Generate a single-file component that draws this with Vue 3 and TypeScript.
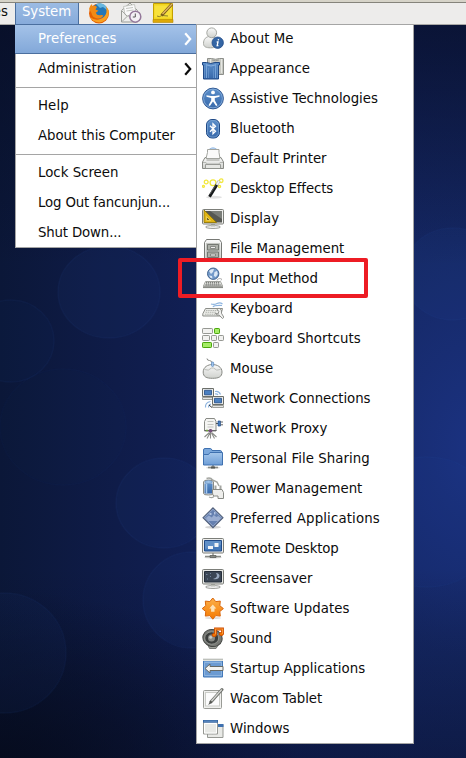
<script setup lang="ts">
interface Item {
  label: string
  icon: string
  tracking?: number
}

interface Entry {
  label: string
  submenu?: boolean
  active?: boolean
  tracking?: number
}

const groups: Entry[][] = [
  [
    { label: 'Preferences', submenu: true, active: true },
    { label: 'Administration', submenu: true, tracking: 0.05 },
  ],
  [{ label: 'Help', tracking: 0.1 }, { label: 'About this Computer', tracking: -0.08 }],
  [
    { label: 'Lock Screen' },
    { label: 'Log Out fancunjun...', tracking: -0.16 },
    { label: 'Shut Down...', tracking: -0.16 },
  ],
]

const starPoints = Array.from({ length: 16 }, (_, i) => {
  const r = i % 2 ? 7.6 : 10.6
  const a = (i * Math.PI) / 8
  return `${(10.8 + r * Math.sin(a)).toFixed(2)},${(11.6 - r * Math.cos(a)).toFixed(2)}`
}).join(' ')

const preferences: Item[] = [
  {
    label: 'About Me',
    icon: `<path d="M1.500 16.500C1.500 12 4 9.500 8 9.500s7 2.500 7 7c0 3.300-2 4.300-6.500 4.300s-7-1-7-4.300z" fill="url(#g-gray)" stroke="#a6a8a3"/><circle cx="9.700" cy="5.800" r="4.900" fill="url(#g-gray)" stroke="#a6a8a3"/><circle cx="15.700" cy="15.700" r="5.700" fill="#3465a4" stroke="#204a87" stroke-width=".8"/><path d="M16.500 12.200l-.2 1.200M14.700 15h1.300l-.8 3.700h1.200" fill="none" stroke="#fff" stroke-width="1.300"/>`,
  },
  {
    label: 'Appearance',
    icon: `<path d="M5.500 1.500h4q4 1.500 8 0h4v16h-16z" fill="#c6c8c2" stroke="#8d8f8a"/><path d="M8.500 2v14M19.500 2v14" stroke="#e6e7e3"/><path d="M10 3q3.500 1.500 7 0M11 6h6" fill="none" stroke="#999b96"/><path d="M.5 5.500h4q4.500 2 8.500 0h4.500v2.500h-1v14h-15v-14h-1z" fill="url(#g-blue)" stroke="#204a87"/><path d="M4.500 7v14M13.500 7v14" stroke="#79a5d8"/><path d="M2.500 9v12M15.500 9v12M6.500 11v10M11.500 11v10" stroke="#6694cb" stroke-width=".8"/><path d="M5 8q4 2 8 0" fill="none" stroke="#8ab1e0"/>`,
  },
  {
    label: 'Assistive Technologies',
    tracking: -0.03,
    icon: `<circle cx="11" cy="11.500" r="10.400" fill="url(#g-blue)" stroke="#204a87" stroke-width=".9"/><circle cx="11" cy="11.500" r="9.400" fill="none" stroke="#8db4df" stroke-width=".8"/><circle cx="11" cy="5.400" r="1.900" fill="#fff"/><path d="M4.500 8.200l4.500.8h4l4.500-.8v1.500l-4.700 1.200v2.600l2.700 4.800-1.400.6L11 14.500l-3.100 4.400-1.400-.6 2.700-4.800v-2.600L4.500 9.700z" fill="#fff"/>`,
  },
  {
    label: 'Bluetooth',
    icon: `<rect x="4.500" y="2.500" width="13" height="18.500" rx="5.500" fill="url(#g-blue)" stroke="#204a87"/><rect x="5.500" y="3.500" width="11" height="16.500" rx="4.500" fill="none" stroke="#79a3d2" stroke-width=".8"/><path d="M8 8.700l5.500 5.600-2.500 2.500V6.700l2.500 2.500L8 14.800" fill="none" stroke="#fff" stroke-width="1.300"/>`,
  },
  {
    label: 'Default Printer',
    tracking: -0.05,
    icon: `<path d="M7 2.500q4-3.500 8 0" fill="#bcd5f2" stroke="#8db4df" stroke-width=".8"/><path d="M3 10.500h16l2.500 4.500v6.500H.5V15z" fill="url(#g-gray)" stroke="#888a85"/><path d="M5.500 2.500h11.500v3l1 6h-14l1.500-6z" fill="#fafafa" stroke="#a3a5a0"/><path d="M4.500 13h13" stroke="#999b96"/><path d="M1 15.500h3l1 1.500h12l1-1.500h3" fill="none" stroke="#b5b7b2"/><path d="M3.500 17.500h15v4h-15z" fill="#e6e7e4" stroke="#888a85" stroke-width=".8"/>`,
  },
  {
    label: 'Desktop Effects',
    tracking: -0.1,
    icon: `<ellipse cx="12" cy="20.300" rx="8" ry="1.500" fill="#e2e2e2"/><g fill="none" stroke="#f2e83b" stroke-width="1.300"><circle cx="4.200" cy="5" r="1.900"/><circle cx="11" cy="5.700" r="2.900"/><circle cx="19.200" cy="3.700" r="1.800"/><circle cx="1.500" cy="9.300" r="1"/><circle cx="17.500" cy="9.500" r="1.100"/></g><path d="M7.500 19.800L15 7.500" stroke="#16191a" stroke-width="3"/><path d="M8 17L13.500 8.500" stroke="#777" stroke-width=".7"/><path d="M14.700 8L17.200 3.800" stroke="#b9bbb7" stroke-width="3"/><path d="M14.900 7.700L17.100 4.200" stroke="#f6f6f4" stroke-width="1.500"/>`,
  },
  {
    label: 'Display',
    icon: `<ellipse cx="11" cy="20" rx="7.500" ry="1.500" fill="#eee" stroke="#888a85" stroke-width=".8"/><path d="M9 17h4v2.500H9z" fill="#babdb6"/><rect x=".5" y="2.500" width="21" height="14.500" rx="1" fill="#eeeeec" stroke="#7c7e79"/><path d="M2 4h18v11.500H2z" fill="#555753"/><path d="M8 4h12v8z" fill="#7a7d78"/><path d="M2 3l12.500 12.500H2z" fill="#e0b414" stroke="#8f7400" stroke-width=".8"/><path d="M4.500 9.500v4h4z" fill="#75641c" stroke="#f5dc61" stroke-width=".8"/>`,
  },
  {
    label: 'File Management',
    icon: `<path d="M4.500 2.500h13l2 3v16.500h-17V5.500z" fill="url(#g-gray)" stroke="#777975"/><path d="M4 6h14v15H4z" fill="#c4c6c1"/><g fill="#aeb1aa" stroke="#6c6f6a" stroke-width=".9"><path d="M5.500 7.500h11v5.500h-11zM5.500 15h11v5.500h-11z"/></g><path d="M8.500 9.500h5v2h-5zM8.500 17h5v2h-5z" fill="#eeeeec" stroke="#777975" stroke-width=".8"/>`,
  },
  {
    label: 'Input Method',
    tracking: -0.08,
    icon: `<path d="M15 13.500q0-2 3-2t1 2" fill="none" stroke="#bbb"/><circle cx="11.200" cy="6.700" r="5.700" fill="#7299c9" stroke="#365987" stroke-width=".9"/><path d="M7 4q2-2.500 5-2l-1 3-2 2zM12.500 5l2.500-1 .8 3-2 3-2-1zM7 8.500l3 .5.500 2.500q-2.500-.3-3.500-3z" fill="#dbe7f4"/><path d="M3.500 14.500h15l2 4.500h-19z" fill="#e9eae7" stroke="#a0a29d"/><path d="M4 15.800h14M3.500 17.800h15" stroke="#5c5e5b" stroke-width="1.200" stroke-dasharray="1.300 .7"/><path d="M1 19.300h20v1.800H1z" fill="#898b86"/>`,
  },
  {
    label: 'Keyboard',
    icon: `<path d="M9 7q3 1 6-.5t5.500.5M11 10q1-2 9-1.500" fill="none" stroke="#8db4df" stroke-width="1.200"/><path d="M3.500 11.500h17l-2 7.500H.8v-2.200z" fill="#ecede9" stroke="#8b8d88"/><path d="M4 13.500h13M3.500 15.300h11M3 17.200h10" stroke="#b3b5b0" stroke-width="1.100" stroke-dasharray="1.500 .7"/><path d="M14.500 11.500q3.500-1 4.800 1.500l.3 3.500 2.300 3.800-1.500 1.200-3.200-3.400q-3 .8-3.800-1.700l2.700.5.7-2.500z" fill="#f2f2f0" stroke="#858782" stroke-width=".9"/>`,
  },
  {
    label: 'Keyboard Shortcuts',
    icon: `<g fill="#f2f2f0" stroke="#969893"><rect x=".5" y="1.500" width="10" height="5" rx=".7"/><rect x=".5" y="8.500" width="7" height="5" rx=".7"/><rect x="9.500" y="8.500" width="5" height="5" rx=".7"/><rect x="16.500" y="8.500" width="5" height="5" rx=".7"/><rect x="11.500" y="15.500" width="5" height="5" rx=".7"/></g><g fill="#a5ec66" stroke="#4aa60c"><rect x="12.500" y="1.500" width="5" height="5" rx=".7"/><rect x=".5" y="15.500" width="9" height="5" rx=".7"/></g>`,
  },
  {
    label: 'Mouse',
    icon: `<path d="M5 1.500q0 2 2.500 2t3 3.500" fill="none" stroke="#888a85"/><path d="M1.200 15C1.200 10 6 7.500 10.500 7.500S20 10 20 15s-3.500 6.300-9.500 6.300S1.200 20 1.200 15z" fill="url(#g-gray)" stroke="#888a85"/><path d="M2.500 12.500q4 2 7-1.500h2q3 3.500 7 1.500" fill="none" stroke="#bbbdb8"/><rect x="9.500" y="5" width="2.200" height="4.500" rx="1.100" fill="#a3c6ed" stroke="#5887bf" stroke-width=".7"/>`,
  },
  {
    label: 'Network Connections',
    tracking: -0.1,
    icon: `<path d="M13 4.500q4-1 5.500 3M13 7q2-.5 3 1M3.500 20.500q-.5-5 5-6M6.500 20.500q0-3 2.500-3.500" fill="none" stroke="#8db4df" stroke-width="1.200"/><g><path d="M.5 1.500h11v8H.5z" fill="#ecece9" stroke="#6c6f6a"/><path d="M2.500 3.300h7v4.500h-7z" fill="#4b80c0" stroke="#204a87" stroke-width=".8"/><path d="M.5 10.500h11v2H.5z" fill="#e6e6e4" stroke="#888a85" stroke-width=".8"/></g><g transform="translate(10 8)"><path d="M.5 1.500h11v8H.5z" fill="#ecece9" stroke="#6c6f6a"/><path d="M2.500 3.300h7v4.500h-7z" fill="#4b80c0" stroke="#204a87" stroke-width=".8"/><path d="M.5 10.500h11v2H.5z" fill="#e6e6e4" stroke="#888a85" stroke-width=".8"/></g><path d="M7 18l3 2.500" stroke="#333"/>`,
  },
  {
    label: 'Network Proxy',
    tracking: 0.08,
    icon: `<path d="M7.500 15.500l-5 4.500M8.500 15v6.500M9.500 15.500l5 4.500M8 16l-3 5.500M9.500 16l3 5.500" stroke="#8b8d88" stroke-width="1.100"/><path d="M4 1.500h8.500l1.500 3v9.500H2.500V4.500z" fill="#f5f5f3" stroke="#888a85"/><path d="M5.500 4.500h6M5.500 7.500h6M5.500 10h6" stroke="#c3c5c0"/><path d="M14 6.500h2.500" stroke="#555"/><path d="M16 4h2.500v5H16z" fill="#4b80c0" stroke="#204a87" stroke-width=".7"/><path d="M18.500 5h2.500M18.500 7.800h2.500" stroke="#666"/><path d="M2.500 13.500h12" stroke="#666"/><ellipse cx="8.500" cy="13.700" rx="2" ry="1.800" fill="#75507b"/><path d="M4 13.500h2" stroke="#73a33b" stroke-width="1.500"/>`,
  },
  {
    label: 'Personal File Sharing',
    tracking: 0.06,
    icon: `<ellipse cx="11" cy="20.700" rx="7" ry="1.200" fill="#ddd"/><path d="M11 18v3M6 20.500h10" stroke="#888a85" stroke-width="1.500"/><path d="M9 19.500h4v2H9z" fill="#555753"/><path d="M1.500 3q0-1.500 1.500-1.500h5.500q1 0 1.500 2h8.500q1 0 1 1.500v11h-18z" fill="#7ba8dc" stroke="#3f71b0"/><path d="M1.500 7.500h5l1.500-2h12.500v12.500h-19z" fill="url(#g-folder)" stroke="#3f71b0"/>`,
  },
  {
    label: 'Power Management',
    icon: `<path d="M4.500 1.500q4-1.500 6 1.500l4.500 2 2 4" fill="none" stroke="#a4a6a1" stroke-width="1.500"/><path d="M1.500 5q0-2 5-2t5 2v11.500q0 1.500-5 1.500t-5-1.500z" fill="#ddd" stroke="#888a85"/><path d="M2.500 6.500h8v10h-8z" fill="url(#g-blue)"/><path d="M4.500 6v10.500" stroke="#a8caee" stroke-width="1.500"/><ellipse cx="6.500" cy="5" rx="3.800" ry="1.300" fill="#a8caee" stroke="#5887bf" stroke-width=".7"/><path d="M13.500 12.500V8.500M18.500 12.500V8.500" stroke="#a4a6a1" stroke-width="2"/><path d="M10.500 12.500h9.500l1.500 3v6h-5.500v-2.500h-3.500q-2 0-2-3z" fill="#eeeeec" stroke="#888a85"/><path d="M12 19q-1 2.500-5 1" fill="none" stroke="#a4a6a1" stroke-width="1.200"/>`,
  },
  {
    label: 'Preferred Applications',
    tracking: 0.14,
    icon: `<ellipse cx="11" cy="20.300" rx="8" ry="1.500" fill="#d5d5d5"/><path d="M11 .8L21 10.700 11 20.700 1 10.700z" fill="#6580b0" stroke="#53617b" stroke-width="1.100"/><path d="M11 2.300l8.500 8.400-8.500 8.500-8.500-8.500z" fill="none" stroke="#a2b3d3" stroke-width=".8"/><path d="M3.800 11l3-2.500 3 2 2-2.500 2.500 2 2-1 2.500 2-2.500 3h-10z" fill="#9aadd1"/><path d="M7.500 6h2v2h-2zM12 5h1.500v2.500H12z" fill="#b1c2df"/>`,
  },
  {
    label: 'Remote Desktop',
    tracking: -0.14,
    icon: `<ellipse cx="11" cy="20.500" rx="9" ry="1.200" fill="#ddd"/><path d="M11 16v4M3 19.500h16" stroke="#888a85" stroke-width="1.300"/><path d="M8 18.500h6v2H8z" fill="#888a85" stroke="#555753" stroke-width=".7"/><rect x=".5" y="1.500" width="21" height="14.500" rx="1" fill="#eeeeec" stroke="#7c7e79"/><path d="M2.500 3.500h17v10.500h-17z" fill="#4378b9" stroke="#204a87"/><path d="M3 4h16v4L3 12z" fill="#7ba5d5" opacity=".5"/><path d="M12.500 6h4v4h-4zM6 9h5v3H6z" fill="#f0f3f6"/>`,
  },
  {
    label: 'Screensaver',
    icon: `<ellipse cx="11" cy="20" rx="7.500" ry="1.500" fill="#eee" stroke="#888a85" stroke-width=".8"/><path d="M9 17h4v2.500H9z" fill="#babdb6"/><rect x=".5" y="2.500" width="21" height="14.500" rx="1" fill="#e6e7e4" stroke="#7c7e79"/><path d="M2.500 4.500h17v10.500h-17z" fill="#3b4655" stroke="#252e3b"/><path d="M14 6q3 4.500-3 6 6.500 1 6.500-3.500-.5-2.500-3.500-2.500z" fill="#97a7bd"/><path d="M4 7.500h1.500M8 6.500h1M5 12h1M8 9.500h1" stroke="#71829b"/>`,
  },
  {
    label: 'Software Updates',
    tracking: 0.09,
    icon: `<ellipse cx="11" cy="21" rx="8" ry="1" fill="#ddd"/><polygon points="${starPoints}" fill="url(#g-orange)" stroke="#d9660c" stroke-width="1" stroke-linejoin="round"/><path d="M10.800 7.500l3.500 4h-1.800v3.300H9.100v-3.300H7.300z" fill="#fde2b7"/>`,
  },
  {
    label: 'Sound',
    icon: `<path d="M5 16l2.500 5.500h6.500l4-6.500z" fill="#a0a29d" stroke="#777975"/><ellipse cx="10.500" cy="11" rx="9.700" ry="8.500" transform="rotate(15 10.500 11)" fill="#777975" stroke="#444643"/><ellipse cx="9.700" cy="11" rx="7" ry="6.200" fill="#3c3f3e" stroke="#a1a39e" stroke-width=".8"/><circle cx="9.500" cy="11" r="3.500" fill="#8a8c88"/><circle cx="8.700" cy="10.300" r="1.500" fill="#c8cac6"/><path d="M13.500 7.500V2h7v5" fill="none" stroke="#ce4d00" stroke-width="2.800"/><ellipse cx="12.200" cy="8" rx="2.100" ry="1.500" fill="#f57900" stroke="#ce4d00"/><ellipse cx="19.300" cy="7" rx="2.100" ry="1.500" fill="#f57900" stroke="#ce4d00"/><path d="M13.500 7.500V2h7v5" fill="none" stroke="#fc9a35" stroke-width="1.100"/>`,
  },
  {
    label: 'Startup Applications',
    icon: `<path d="M1.500 2.500h19v17.500h-19z" fill="#6c9bd2" stroke="#4378b9"/><path d="M1 2h20v2H1z" fill="#e4e6e1"/><path d="M1 2.200h20" stroke="#a0a29d" stroke-width=".8"/><path d="M2.500 5.500h17v13h-17z" fill="none" stroke="#8db4df"/><path d="M3 11.500l5-4.500v2.500h13v4H8v2.500z" fill="#f3f3f1" stroke="#666964"/>`,
  },
  {
    label: 'Wacom Tablet',
    tracking: -0.06,
    icon: `<rect x="1.500" y="3.500" width="18" height="18" rx="1" fill="#f0f0ee" stroke="#999b96"/><rect x="3.500" y="5.500" width="14" height="13.500" fill="#fcfcfc" stroke="#cbcdc8"/><path d="M6 17.500q4-1 7-5" stroke="#ccc" fill="none"/><path d="M9 14.800L20 2.500" stroke="#6c6f6a" stroke-width="3" stroke-linecap="round"/><path d="M9.500 14L19.800 2.500" stroke="#d4d5d1" stroke-width="1.300"/><path d="M6.500 17.800l1.600-4 2.200 1.800z" fill="#555753"/>`,
  },
  {
    label: 'Windows',
    icon: `<path d="M10.500 7.500h10.500v13H10.500z" fill="#e8e9e6" stroke="#969893"/><path d="M10 7h11.500v3H10z" fill="#3f71b0"/><path d="M5.500 15.500v5h15.500" fill="#e8e9e6" stroke="#969893"/><path d="M1.500 3.500h14v13.500h-14z" fill="#e8e9e6" stroke="#969893"/><path d="M2.500 6.500h12v9.500h-12z" fill="none" stroke="#fff"/><path d="M1 3h15v2.700H1z" fill="#3465a4"/><path d="M2 4.200h13" stroke="#739fcf" stroke-width=".8"/>`,
  },
]
</script>

<template>
  <div class="desktop">
    <svg class="wallpaper" viewBox="0 0 466 758" aria-hidden="true">
      <defs>
        <linearGradient id="g-gray" x1="0" y1="0" x2="0" y2="1"><stop offset="0" stop-color="#fafafa" /><stop offset="1" stop-color="#cfd1cd" /></linearGradient>
        <linearGradient id="g-blue" x1="0" y1="0" x2="0" y2="1"><stop offset="0" stop-color="#5c8fca" /><stop offset="1" stop-color="#3768aa" /></linearGradient>
        <linearGradient id="g-folder" x1="0" y1="0" x2="0" y2="1"><stop offset="0" stop-color="#a6c7eb" /><stop offset="1" stop-color="#6d9dd6" /></linearGradient>
        <linearGradient id="g-orange" x1="0" y1="0" x2="0" y2="1"><stop offset="0" stop-color="#fbb04a" /><stop offset="1" stop-color="#f57900" /></linearGradient>
      </defs>
      <g fill="#2550a8" fill-opacity=".07" stroke="#3460b8" stroke-opacity=".07" stroke-width="1.500">
        <ellipse cx="109" cy="292" rx="51" ry="46" />
        <ellipse cx="11" cy="341" rx="43" ry="41" fill-opacity=".04" />
        <ellipse cx="63" cy="427" rx="63" ry="58" fill-opacity=".02" stroke-opacity=".03" />
        <ellipse cx="164" cy="503" rx="48" ry="45" />
        <ellipse cx="192" cy="600" rx="49" ry="48" />
        <ellipse cx="4" cy="653" rx="62" ry="60" />
        <ellipse cx="453" cy="274" rx="50" ry="46" />
        <ellipse cx="427" cy="522" rx="70" ry="65" fill-opacity=".05" stroke-opacity=".06" />
      </g>
    </svg>

    <header class="panel">
      <span class="places">Places</span>
      <span class="system">System</span>
      <div class="launchers">
        <svg width="22" height="22" viewBox="0 0 22 22">
          <circle cx="11" cy="11.500" r="10" fill="#e66000" />
          <circle cx="11.500" cy="9" r="7.500" fill="#2377b8" />
          <path d="M8 2q5-2 9 1 2 2 2 5l-4-3-3 1z" fill="#67b7e0" />
          <path d="M1 7q1-4 3-5l.5 2.500Q7 3 9 5L7.500 7.500l3 1.200-2.700 2q1 3 4.200 2.500 2-.5 3.500.3-2 3.500-6 3-5.500-1-6-5.500z" fill="#f18a15" />
          <path d="M18.500 5q3 3 2 8-2 6.500-9 7.500Q4.500 20 2 15q4 3.500 9 2.500 6-1.500 7.500-7z" fill="#f8a021" />
        </svg>
        <svg width="22" height="22" viewBox="0 0 22 22">
          <path d="M1.500 8.500L10 1l7.500 7.500v11.500h-16z" fill="#eeeeec" stroke="#999b96" />
          <path d="M3.500 4.500l11-2 1.500 8-6 5-5-3z" fill="#fafafa" stroke="#babdb6" stroke-width=".8" />
          <path d="M6 6.500l7-1M6.500 9l7-1" stroke="#c3c5c0" />
          <path d="M2 19.500l6-6 3 1M2 9l5 5" fill="none" stroke="#a4a6a1" />
          <circle cx="15.300" cy="14.700" r="5.500" fill="#f3f0f4" stroke="#94789a" stroke-width="1.500" />
          <path d="M15.300 11.500v3.500h-2.500" fill="none" stroke="#555" />
        </svg>
        <svg width="22" height="22" viewBox="0 0 22 22">
          <path d="M1.500 1.500h19v17h-19z" fill="#f2d51f" stroke="#c4a000" />
          <path d="M2.500 3.500h17v12h-17z" fill="#fbe94e" opacity=".6" />
          <path d="M1 17.500h20v3H1z" fill="#dda806" stroke="#b58900" stroke-width=".6" />
          <path d="M5 14q2 1.500 5-.5l6 .5" fill="none" stroke="#8d8125" />
          <path d="M9.500 13.500L20 2" stroke="#765a1c" stroke-width="2.800" />
          <path d="M10.500 12L20 2" stroke="#e5b860" stroke-width="1.300" />
        </svg>
      </div>
    </header>

    <main class="menus">
      <nav class="menu system-menu">
        <div v-for="(group, g) in groups" :key="g" class="group">
          <div v-for="entry in group" :key="entry.label" class="entry" :class="{ active: entry.active }">
            <span :style="{ letterSpacing: `${entry.tracking ?? 0}px` }">{{ entry.label }}</span>
            <svg v-if="entry.submenu" class="arrow" width="8" height="14" viewBox="0 0 8 14">
              <path d="M1.200 1.300L6.200 7l-5 5.700" fill="none" stroke="currentColor" stroke-width="2.200" />
            </svg>
          </div>
        </div>
      </nav>
      <nav class="menu preferences-menu">
        <div v-for="item in preferences" :key="item.label" class="item">
          <svg width="22" height="23" viewBox="0 0 22 23" v-html="item.icon"></svg>
          <span :style="{ letterSpacing: `${item.tracking ?? 0}px` }">{{ item.label }}</span>
        </div>
      </nav>
    </main>
    <div class="highlight"></div>
  </div>
</template>

<style>
body {
  margin: 0;
  overflow: hidden;
}
</style>

<style scoped>
.desktop {
  position: relative;
  width: 466px;
  height: 758px;
  overflow: hidden;
  font-family: "DejaVu Sans", sans-serif;
  font-size: 13.33px;
  color: #0c0c0c;
  background:
    radial-gradient(ellipse 300px 420px at 480px 450px, rgba(28, 52, 134, 0.9), rgba(24, 46, 112, 0.5) 50%, transparent),
    linear-gradient(90deg, #0b1738, #0f1c49 25%, #12215a 50%, #12225a);
}

.desktop::before {
  content: "";
  position: absolute;
  inset: 0;
  background:
    radial-gradient(ellipse 300px 180px at 0 770px, rgba(5, 10, 26, 0.85), transparent),
    linear-gradient(0deg, rgba(6, 12, 34, 0.4), transparent 25%),
    linear-gradient(180deg, rgba(6, 12, 34, 0.7), transparent 35%);
}

.wallpaper {
  position: absolute;
  inset: 0;
  width: 466px;
  height: 758px;
}

.panel {
  position: relative;
  display: flex;
  box-sizing: border-box;
  height: 25px;
  overflow: hidden;
  border-top: 2px solid #d6d3c8;
  border-bottom: 1px solid #a9a8a6;
  background: #edeceb;
  box-shadow: inset 0 1px #85837b;
  line-height: 19px;
}

.places {
  display: flex;
  justify-content: flex-end;
  flex: none;
  width: 8px;
  margin-right: 7px;
}

.system {
  box-sizing: border-box;
  width: 64px;
  height: 22px;
  margin-top: 1px;
  padding-left: 6px;
  border: solid #4b6f9f;
  border-width: 0 1px;
  background: linear-gradient(#9bbbe3, #86aada);
  color: #fff;
  letter-spacing: -0.1px;
  line-height: 18px;
}

.launchers {
  display: flex;
  gap: 10px;
  height: 21px;
  margin: 1px 0 0 9px;
  overflow: hidden;
}

.launchers svg {
  margin-top: -1px;
}

.menus {
  position: relative;
  display: flex;
  align-items: flex-start;
  margin: -1px 0 0 15px;
}

.menu {
  box-sizing: border-box;
  background: #fff;
  border: 1px solid #a5a5a5;
  border-top-width: 0;
}

.system-menu {
  width: 181px;
  height: 224px;
  border-right: 0;
}

.group + .group {
  margin-top: 3px;
  padding-top: 3px;
  border-top: 1px solid #a5a5a5;
}

.entry {
  display: flex;
  align-items: center;
  justify-content: space-between;
  box-sizing: border-box;
  height: 30px;
  padding: 0 4px 2px 22px;
}

.entry.active {
  margin-left: -1px;
  padding-left: 23px;
  color: #fff;
  background: linear-gradient(#a5c3e9, #81a7d8);
  box-shadow: inset 0 1px #4b6f9f, inset 0 -1px #4b6f9f;
}

.arrow {
  flex: none;
  margin-top: 2px;
}

.preferences-menu {
  width: 218px;
  height: 720px;
  border-top: 1px solid #a5a5a5;
}

.item {
  display: flex;
  align-items: center;
  gap: 6px;
  box-sizing: border-box;
  height: 30px;
  padding: 0 0 4px 5px;
}

.item:last-child {
  height: 28px;
  padding-bottom: 2px;
}

.item svg {
  flex: none;
  margin-top: 1px;
}

.highlight {
  position: absolute;
  left: 178px;
  top: 258px;
  box-sizing: border-box;
  width: 190px;
  height: 40px;
  border: 4px solid #ed1c24;
  border-radius: 2px;
}
</style>
